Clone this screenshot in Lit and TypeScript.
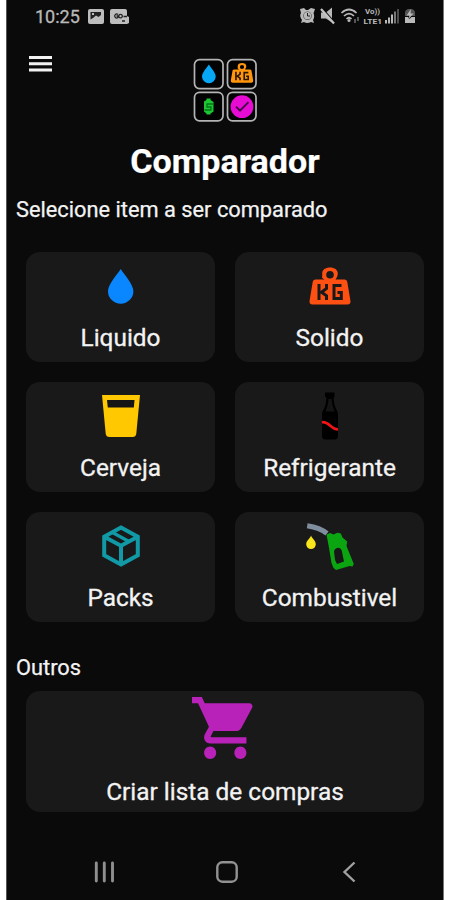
import { LitElement, html, css, svg } from "lit";
import { customElement, property } from "lit/decorators.js";

const KG = svg`
  <path fill-rule="evenodd" d="M12 10.500C12.500 7.500 12.200 6.800 12.200 6.400 12.200 2.700 15.500 .5 20 .5S27.800 2.700 27.800 6.400C27.800 8.500 27 10 25.500 12.500H34.500Q36.500 12.500 37.200 14.500L40.400 33.500Q41 37.500 37.500 37.500H2.500Q-1 37.500 -.4 33.500L2.800 14.500Q3.500 12.500 5.500 12.500H14.500Q12.500 11.500 12 10.500ZM20 4A3.800 3.800 0 1 0 20 11.600A3.800 3.800 0 1 0 20 4Z"/>
  <path fill="none" stroke="var(--cut)" stroke-width="3" d="M9 17V33M16.500 17V21.500L11.500 25.200L16.500 28.800V33M31.500 18.500H24V31.500H31.300V25.500H27.500"/>`;

const DROP = svg`<path d="M12.700 0C16.500 6 25.400 15.300 25.400 22.200A12.700 12.500 0 0 1 0 22.200C0 15.300 8.900 6 12.700 0Z"/>`;

const icons: Record<string, unknown> = {
  drop: html`<svg width="26" height="35" viewBox="0 0 26 35" fill="#0a86ff">${DROP}</svg>`,
  kg: html`<svg width="42" height="38" viewBox="-1 0 42 38" fill="#ff5013" style="--cut:#191919">${KG}</svg>`,
  beer: html`<svg width="38" height="42" viewBox="0 0 38 42"><path fill="#ffc800" d="M0 0H38L34.300 38.500Q33.900 42 30.500 42H7.500Q4.100 42 3.700 38.500Z"/><path fill="#151515" d="M5 5H32.500L31.800 12.500H5.800Z"/></svg>`,
  bottle: html`<svg width="18" height="48" viewBox="0 0 18 48"><path d="M4 .5H13.500V5H12.700C12.800 10 13.200 12.500 15.200 17C16.300 19 17 20.500 17 23V44Q17 47.500 13.500 47.500H4.500Q1 47.500 1 44V23C1 20.500 1.700 19 2.800 17C4.800 12.500 5.200 10 5.300 5H4Z"/><path fill="#141414" d="M7.500 7H10.700C10.800 12 12 15 13.500 19.500H4.500C6 15 7.300 12 7.500 7Z"/><path fill="none" stroke="#f01418" stroke-width="2.700" d="M1 30.300C8 29 9.500 37.500 17 37.500"/></svg>`,
  box: html`<svg width="38" height="42" viewBox="0 0 38 42" fill="none" stroke="#1199a6" stroke-width="4"><path d="M19 2.500L35.800 11.700V30.300L19 39.500L2.200 30.300V11.700ZM2.200 11.700L19 20.800L35.800 11.700M19 20.800V39.500"/><path stroke-width="3.200" d="M10.500 7.500L27 16.500"/></svg>`,
  fuel: html`<svg width="48" height="50" viewBox="0 0 48 50"><path fill="none" stroke="#7f8e9d" stroke-width="5" d="M1.200 4.800C9 6 15 7.500 21 12.500"/><path fill="#f8e51c" d="M5 14.500C6.200 18 9.800 19.500 9.800 23.300A4.800 4.800 0 0 1 .2 23.300C.2 19.500 4 18 5 14.500Z"/><path fill="#0ca512" d="M20.500 13.500L24 12L27.500 13.500L31.500 11.800L34.800 12.500L36.500 16.500L41.200 20.500L40.500 25L47.800 43L46.500 45.500L43.500 45L30 49L27.500 47L25.500 42L23 27Z"/><path fill="#171717" d="M28 30.500Q28.300 27.500 31 27Q34.500 26 35.700 29.500L38 40.500L31 43L29 39Z"/></svg>`,
  cart: html`<svg width="62" height="62" viewBox="1 2 20.500 20" preserveAspectRatio="none" fill="#b822b9"><path d="M7 18c-1.100 0-1.990.900-1.990 2S5.900 22 7 22s2-.900 2-2-.900-2-2-2zM1 2v2h2l3.600 7.590-1.350 2.450c-.160.280-.250.610-.250.960 0 1.100.900 2 2 2h12v-2H7.420c-.140 0-.250-.110-.250-.250l.030-.120.900-1.630h7.450c.750 0 1.410-.410 1.750-1.030l3.580-6.490c.080-.140.120-.310.120-.480 0-.550-.450-1-1-1H5.210l-.940-2H1zm16 16c-1.100 0-1.990.900-1.990 2s.890 2 1.990 2 2-.900 2-2-.900-2-2-2z"/></svg>`,
};

@customElement("option-card")
class OptionCard extends LitElement {
  @property() icon = "";
  @property() label = "";

  static styles = css`
    :host { display: flex; flex-direction: column; align-items: center; background: #191919; border-radius: 14px; overflow: hidden; }
    .pic { height: 68px; display: flex; align-items: center; justify-content: center; }
    :host([wide]) .pic { height: 73px; padding-right: 4px; }
    :host([wide]) .label { margin-top: 12px; }
    .label { font-size: 24.400px; line-height: 32px; margin-top: 2px; white-space: nowrap; -webkit-text-stroke: 0.300px currentColor; }
    svg { display: block; }
  `;

  render() {
    return html`<div class="pic">${icons[this.icon]}</div><div class="label">${this.label}</div>`;
  }
}

@customElement("app-root")
class AppRoot extends LitElement {
  static styles = css`
    :host { display: block; width: 450px; height: 900px; background: #fff; overflow: hidden; font-family: Roboto, "Liberation Sans", sans-serif; color: #f3f3f3; }
    * { box-sizing: border-box; }
    svg { display: block; }
    .phone { width: 438px; height: 900px; margin-left: 6px; background: #0a0a0a; border-left: 1px solid #555; border-right: 1px solid #777; display: flex; flex-direction: column; }
    .status { height: 32px; display: flex; align-items: center; padding: 0 26px 0 28px; color: #b9b9b9; flex: none; }
    .clock { font-size: 18px; width: 53px; -webkit-text-stroke: 0.300px currentColor; }
    .notes { display: flex; gap: 6px; }
    .system { margin-left: auto; }
    .head { height: 98px; display: grid; grid-template-columns: 1fr 64px 1fr; flex: none; }
    .menu { margin: 24px 0 0 22px; }
    .logo { margin-top: 26px; }
    .title { margin: 0; height: 62px; line-height: 62px; text-align: center; font-size: 34.100px; font-weight: 700; color: #fff; flex: none; -webkit-text-stroke: 0.200px currentColor; }
    .section { font-size: 21.800px; line-height: 30px; height: 30px; padding-left: 9px; flex: none; -webkit-text-stroke: 0.250px currentColor; }
    .hint { margin-top: 3px; }
    .grid { display: grid; grid-template-columns: 1fr 1fr; grid-auto-rows: 110px; gap: 20px; margin: 27px 19px 0; flex: none; }
    .others { margin-top: 31px; }
    .list { height: 121px; margin: 8px 19px 0; flex: none; }
    .nav { display: flex; justify-content: space-between; align-items: center; margin: 49px 87px 0 87px; }
    .home { margin-right: 4px; }
  `;

  private items = [
    ["drop", "Liquido"],
    ["kg", "Solido"],
    ["beer", "Cerveja"],
    ["bottle", "Refrigerante"],
    ["box", "Packs"],
    ["fuel", "Combustivel"],
  ];

  render() {
    return html`
      <div class="phone">
        <div class="status">
          <span class="clock">10:25</span>
          <div class="notes">
            <svg width="16" height="15" viewBox="0 0 16 15"><rect width="16" height="15" rx="2" fill="#bdbdbd"/><path fill="#222" d="M2.500 3H13V6L10.500 8L8 6.500L5 9L2.500 10.500Z"/><path fill="#bdbdbd" d="M4 4H6V6H4Z"/></svg>
            <svg width="19" height="15" viewBox="0 0 19 15"><path fill="#bdbdbd" d="M2 0H15Q17 0 17 2V7L19 8V14L17 15H2Q0 15 0 13V2Q0 0 2 0Z"/><path fill="none" stroke="#222" stroke-width="1.300" d="M8 5.500A2 2 0 1 0 8 8.500V7H6.500M10.500 5.300A1.800 1.800 0 1 0 10.600 5.300M13.500 7.500H17M12 12H15"/></svg>
          </div>
          <svg class="system" width="118" height="18" viewBox="0 0 118 18" fill="#b9b9b9">
            <path d="M1 2L5 1L7 3H9L12 1L16 2L15 5L14.500 6Q16 10 14 13L15 16L12 15Q8 17 5 15L2 16L3 13Q0 9 2 6Z"/>
            <circle cx="8.500" cy="8.700" r="4.300" fill="#555"/><circle cx="8.500" cy="8.700" r="3.600"/><path d="M8.500 6V9H11" fill="none" stroke="#222"/>
            <path d="M22 5.500H27L33 .5V15.500L27 11.500H22Z"/><path d="M23 1L36 16" stroke="#0a0a0a" stroke-width="1.500"/><path d="M22 2L35 16.500" stroke="#c4c4c4" stroke-width="2.200"/>
            <g fill="none" stroke="#b9b9b9" stroke-width="1.700"><path d="M42.500 6Q50 -1 57.500 6M45 9Q50 4 55 9M47.500 12Q50 9.500 52.500 12"/></g><circle cx="50" cy="13.500" r="1.500"/>
            <path fill="#555" d="M55 12H57V16H55ZM58 10H60V14H58Z"/>
            <text x="66" y="7.300" font-size="7.500" font-weight="700" textLength="15" lengthAdjust="spacingAndGlyphs">Vo))</text>
            <text x="64.500" y="16.600" font-size="7.500" font-weight="700" textLength="18.500" lengthAdjust="spacingAndGlyphs">LTE1</text>
            <path d="M86 13H88V16.500H86ZM89 10.500H91V16.500H89ZM92 7.500H94V16.500H92Z"/><path fill="#777" d="M95 4.500H97V16.500H95Z"/><path fill="#4c4c4c" d="M98 2H100V16.500H98Z"/>
            <path fill="#555" d="M109 2H113Q116 3 116 6V9H106V6Q106 3 109 2Z"/><path d="M112 2L107.500 8.500H110.500L109.500 12L114.500 6.500H111.500ZM106 10H109L110.500 12L112.500 10H116V16H106Z"/>
          </svg>
        </div>
        <div class="head">
          <svg class="menu" width="23" height="16" viewBox="0 0 23 16"><path fill="#f2f2f2" d="M0 0H23V3H0ZM0 6.200H23V9.200H0ZM0 12.500H23V15.500H0Z"/></svg>
          <svg class="logo" width="64" height="66" viewBox="0 0 64 66">
            <g fill="#030303" stroke="#b4b4b4" stroke-width="1.700"><rect x="1.500" y="1.600" width="28.500" height="29" rx="5"/><rect x="34.500" y="1.600" width="28.500" height="29" rx="5"/><rect x="1.500" y="34.300" width="28.500" height="28.500" rx="5"/><rect x="34.500" y="34.300" width="28.500" height="28.500" rx="5"/></g>
            <g transform="translate(9 6.500) scale(.54)" fill="#06a7f5">${DROP}</g>
            <g transform="translate(38 4.800) scale(.55 .53)" fill="#ff960e" style="--cut:#2a1700">${KG}</g>
            <path fill="#1bc831" d="M13.500 40.500H17.500V42L20.500 44V53.500L17.500 55.500V56.500H13.500V55.500L11 53.500V43.500L13.500 42Z"/><path fill="none" stroke="#06761a" stroke-width="1.300" d="M20 46H14V49H18V52H11.500"/>
            <circle cx="49" cy="48.700" r="11.400" fill="#e80bd3"/><path fill="none" stroke="#420047" stroke-width="1.900" d="M43 48.700L47 52.700L55.500 44.200"/>
          </svg>
        </div>
        <h1 class="title">Comparador</h1>
        <div class="section hint">Selecione item a ser comparado</div>
        <div class="grid">
          ${this.items.map(([icon, label]) => html`<option-card icon=${icon} label=${label}></option-card>`)}
        </div>
        <div class="section others">Outros</div>
        <option-card class="list" wide icon="cart" label="Criar lista de compras"></option-card>
        <div class="nav">
          <svg width="21" height="22" viewBox="0 0 21 22"><path stroke="#8f8f8f" stroke-width="2.900" stroke-linecap="round" d="M2.300 2V20M10.300 2V20M18.500 2V20"/></svg>
          <svg class="home" width="22" height="22" viewBox="0 0 22 22"><rect x="1.300" y="1.300" width="19.400" height="19.400" rx="5" fill="none" stroke="#929292" stroke-width="2.400"/></svg>
          <svg width="14" height="22" viewBox="0 0 14 22"><path fill="none" stroke="#a0a0a0" stroke-width="2.400" d="M12.500 1.500L2.500 11L12.500 20.500"/></svg>
        </div>
      </div>`;
  }
}
